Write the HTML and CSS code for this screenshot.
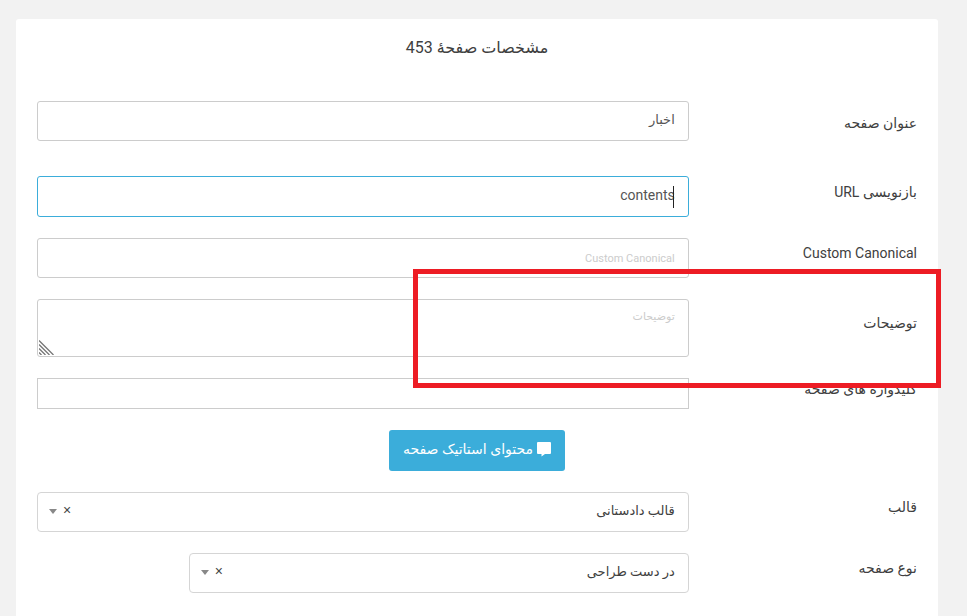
FILE: index.html
```html
<!DOCTYPE html>
<html lang="fa" dir="rtl">
<head>
<meta charset="utf-8">
<meta name="viewport" content="width=device-width, initial-scale=1">
<title>مشخصات صفحهٔ 453</title>
<link rel="stylesheet" href="styles.css">
</head>
<body>
<main class="page">
  <form class="card">
    <h1 class="title">مشخصات صفحهٔ 453</h1>

    <div class="row row-first">
      <label class="label" for="page-title">عنوان صفحه</label>
      <div class="field"><input class="control" id="page-title" type="text" value="اخبار"></div>
    </div>

    <div class="row">
      <label class="label" for="page-url">بازنویسی URL</label>
      <div class="field field-active"><input class="control control-active" id="page-url" type="text" value="contents"></div>
    </div>

    <div class="row">
      <label class="label" for="canonical">Custom Canonical</label>
      <div class="field"><input class="control control-hint" id="canonical" type="text" placeholder="Custom Canonical"></div>
    </div>

    <div class="row">
      <label class="label" for="description">توضیحات</label>
      <div class="field">
        <textarea class="control control-area" id="description" placeholder="توضیحات"></textarea>
        <svg class="grip" width="15" height="15" viewBox="0 0 15 15" aria-hidden="true"><path d="M0 .5 14.500 15M0 4.500 10.500 15M0 8.500 6.500 15M0 12.500 2.500 15" fill="none" stroke="#777" stroke-width="1.300"/></svg>
      </div>
      <div class="marker"></div>
    </div>

    <div class="row">
      <label class="label" for="keywords">کلیدواژه های صفحه</label>
      <div class="field"><input class="control control-tags" id="keywords" type="text"></div>
    </div>

    <button class="button" type="button">
      <svg width="14" height="15" viewBox="0 0 14 15" aria-hidden="true"><path d="M1 0h12a1 1 0 0 1 1 1v10a1 1 0 0 1-1 1H8L4.500 14.500V12H1a1 1 0 0 1-1-1V1a1 1 0 0 1 1-1z" fill="#fff"/></svg>
      <span>محتوای استاتیک صفحه</span>
    </button>

    <div class="row">
      <label class="label" for="template">قالب</label>
      <div class="field">
        <select class="control control-select" id="template"><option>قالب دادستانی</option></select>
        <button class="clear" type="button" aria-label="حذف قالب">×</button>
      </div>
    </div>

    <div class="row">
      <label class="label" for="page-type">نوع صفحه</label>
      <div class="field field-narrow">
        <select class="control control-select" id="page-type"><option>در دست طراحی</option></select>
        <button class="clear" type="button" aria-label="حذف نوع صفحه">×</button>
      </div>
    </div>
  </form>
</main>
</body>
</html>
```
FILE: styles.css
```css
* {
  box-sizing: border-box;
}

body {
  margin: 0;
  background: #f2f2f2;
  color: #404040;
  font: 14px/20px Roboto, "DejaVu Sans", sans-serif;
}

.page {
  padding: 19px 29px 0 16px;
}

.card {
  display: flex;
  flex-direction: column;
  gap: 21px;
  min-height: calc(100vh - 19px);
  padding: 17px 21px 23px;
  border-radius: 3px 3px 0 0;
  background: #fff;
}

.title {
  margin: 0 0 20px;
  font-size: 16px;
  font-weight: 400;
  line-height: 24px;
  text-align: center;
}

.row {
  position: relative;
  display: grid;
  grid-template-columns: 1fr 3fr;
  column-gap: 11px;
  align-items: center;
}

.row-first .field {
  margin-bottom: 14px;
}

.label {
  padding-bottom: 10px;
}

.field {
  position: relative;
}

.field-narrow {
  width: 100%;
  max-width: 500px;
}

.control {
  display: block;
  width: 100%;
  height: 40px;
  margin: 0;
  padding: 0 13px 4px;
  border: 1px solid #ccc;
  border-radius: 3px;
  outline: 0;
  background: #fff;
  color: #555;
  font-family: inherit;
  font-size: 13px;
}

.control::placeholder {
  color: #ccc;
  opacity: 1;
}

.control-active {
  height: 41px;
  border-color: #3badda;
  font-size: 14px;
}

.field-active::after {
  content: "";
  position: absolute;
  top: 10px;
  right: 15px;
  width: 1px;
  height: 22px;
  background: #222;
}

.control-hint {
  padding-bottom: 0;
  font-size: 11px;
}

.control-area {
  height: 58px;
  padding-top: 8px;
  font-size: 11px;
  line-height: 18px;
  resize: none;
}

.grip {
  position: absolute;
  bottom: 2px;
  left: 2px;
}

.marker {
  position: absolute;
  top: -30px;
  right: -24px;
  bottom: -31px;
  width: 60%;
  border: 5px solid #ed1c24;
  pointer-events: none;
  z-index: 1;
}

.control-tags {
  height: 31px;
  border-radius: 0;
}

.button {
  display: flex;
  align-items: center;
  align-self: center;
  gap: 4px;
  height: 41px;
  padding: 0 14px 3px;
  border: 0;
  border-radius: 3px;
  background: #3badda;
  color: #fff;
  font: inherit;
}

.control-select {
  border-color: #d5d5d5;
  border-radius: 4px;
  color: #404040;
  appearance: none;
}

.field:has(.control-select)::after {
  content: "";
  position: absolute;
  top: 17px;
  left: 12px;
  border: 4px solid transparent;
  border-top: 5px solid #888;
  border-bottom: 0;
}

.clear {
  position: absolute;
  top: 8px;
  left: 24px;
  width: 12px;
  height: 20px;
  padding: 0;
  border: 0;
  background: none;
  color: #444;
  font: 14px/20px "Liberation Sans", sans-serif;
}
```
